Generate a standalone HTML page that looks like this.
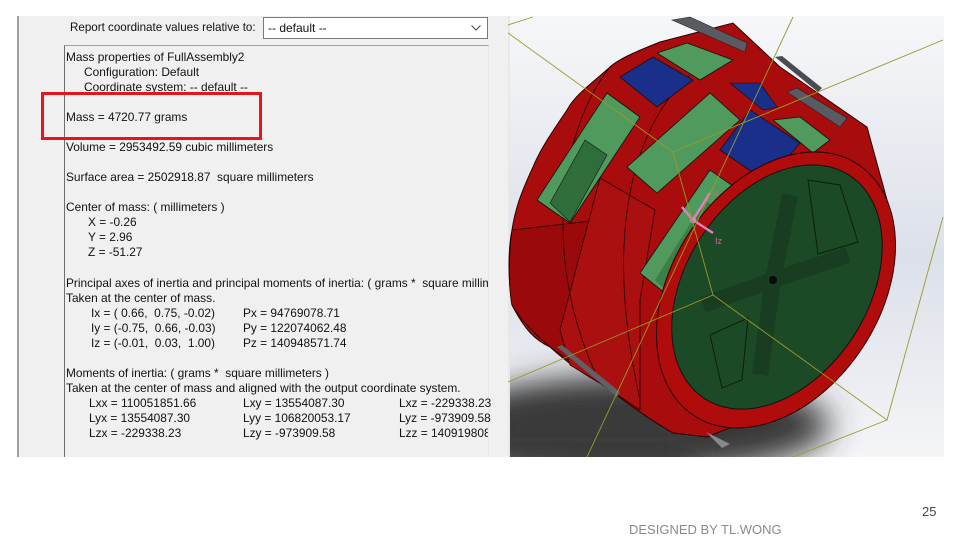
<!DOCTYPE html>
<html><head><meta charset="utf-8"><style>
*{margin:0;padding:0;box-sizing:border-box}
body{width:960px;height:540px;background:#fff;position:relative;overflow:hidden;font-family:"Liberation Sans",sans-serif}
#panel{position:absolute;left:17px;top:16px;width:491px;height:441px;background:#f0f0f0;border-left:2px solid #a0a0a0}
.t{position:absolute;font-size:11.9px;color:#111;white-space:nowrap;line-height:15px}
#lbl{left:70px;top:20px;font-size:11.6px}
#dd{position:absolute;left:263px;top:17px;width:225px;height:22px;background:#fff;border:1px solid #7a7a7a}
#box{position:absolute;left:64px;top:45px;width:425px;height:412px;border-left:1px solid #6d6d6d;border-top:1px solid #a0a0a0;border-right:1px solid #e6e6e6;background:#f0f0f0;overflow:hidden}
#red{position:absolute;left:41px;top:92px;width:221px;height:48px;border:3px solid #e8141c}
</style></head><body>
<div id="panel"></div>
<div class="t" id="lbl">Report coordinate values relative to:</div>
<div id="dd"><div class="t" style="left:4px;top:3px;font-size:12px">-- default --</div>
<svg style="position:absolute;right:6px;top:7px" width="10" height="6"><path d="M0.5 0.5 L5 5 L9.5 0.5" fill="none" stroke="#444" stroke-width="1"/></svg></div>
<div id="box"></div>
<div class="t" style="left:66px;top:50px">Mass properties of FullAssembly2</div>
<div class="t" style="left:84px;top:65px">Configuration: Default</div>
<div class="t" style="left:84px;top:80px">Coordinate system: -- default --</div>
<div class="t" style="left:66px;top:110px">Mass = 4720.77 grams</div>
<div class="t" style="left:66px;top:140px">Volume = 2953492.59 cubic millimeters</div>
<div class="t" style="left:66px;top:170px">Surface area = 2502918.87&nbsp; square millimeters</div>
<div class="t" style="left:66px;top:200px">Center of mass: ( millimeters )</div>
<div class="t" style="left:88px;top:215px">X = -0.26</div>
<div class="t" style="left:88px;top:230px">Y = 2.96</div>
<div class="t" style="left:88px;top:245px">Z = -51.27</div>
<div class="t" style="left:66px;top:276px;width:422px;overflow:hidden">Principal axes of inertia and principal moments of inertia: ( grams *&nbsp; square millimeters )</div>
<div class="t" style="left:66px;top:291px">Taken at the center of mass.</div>
<div class="t" style="left:91px;top:306px">Ix = ( 0.66,&nbsp; 0.75, -0.02)</div>
<div class="t" style="left:243px;top:306px">Px = 94769078.71</div>
<div class="t" style="left:91px;top:321px">Iy = (-0.75,&nbsp; 0.66, -0.03)</div>
<div class="t" style="left:243px;top:321px">Py = 122074062.48</div>
<div class="t" style="left:91px;top:336px">Iz = (-0.01,&nbsp; 0.03,&nbsp; 1.00)</div>
<div class="t" style="left:243px;top:336px">Pz = 140948571.74</div>
<div class="t" style="left:66px;top:366px">Moments of inertia: ( grams *&nbsp; square millimeters )</div>
<div class="t" style="left:66px;top:381px">Taken at the center of mass and aligned with the output coordinate system.</div>
<div class="t" style="left:89px;top:396px">Lxx = 110051851.66</div>
<div class="t" style="left:243px;top:396px">Lxy = 13554087.30</div>
<div class="t" style="left:399px;top:396px">Lxz = -229338.23</div>
<div class="t" style="left:89px;top:411px">Lyx = 13554087.30</div>
<div class="t" style="left:243px;top:411px">Lyy = 106820053.17</div>
<div class="t" style="left:399px;top:411px">Lyz = -973909.58</div>
<div class="t" style="left:89px;top:426px">Lzx = -229338.23</div>
<div class="t" style="left:243px;top:426px">Lzy = -973909.58</div>
<div class="t" style="left:399px;top:426px;width:89px;overflow:hidden">Lzz = 140919808.15</div>
<div id="red"></div>

<svg style="position:absolute;left:508px;top:16px" width="436" height="441" viewBox="508 16 436 441">
<defs>
<linearGradient id="bg" x1="0" y1="0" x2="0" y2="1"><stop offset="0" stop-color="#f6f7f9"/><stop offset="0.55" stop-color="#dce0e9"/><stop offset="1" stop-color="#f4f5f7"/></linearGradient>
<filter id="bl" x="-50%" y="-50%" width="200%" height="200%"><feGaussianBlur stdDeviation="16"/></filter>
</defs>
<rect x="508" y="16" width="436" height="441" fill="url(#bg)"/>
<ellipse cx="640" cy="425" rx="190" ry="50" fill="#383838" filter="url(#bl)"/>
<rect x="490" y="410" width="200" height="60" fill="#3a3a3a" filter="url(#bl)"/>
<rect x="508" y="16" width="2" height="441" fill="#e8e8e8"/>
<!-- drum body -->
<path d="M660 42 C640 50 620 58 610 67 C590 85 575 95 567 110 C550 135 540 150 533 167 C520 195 515 210 512 230 C508 250 508 280 512 305 C525 330 535 340 550 347 C570 365 585 375 600 383 C630 405 650 420 673 433 L707 437 L800 400 L887 200 L867 127 L780 67 L733 23 Z" fill="#a80c0c" stroke="#2a0000" stroke-width="1"/>
<path d="M512 230 C508 260 509 290 512 305 C530 335 560 355 600 383 L600 220 Z" fill="#9a0a0a" stroke="#2a0000" stroke-width="0.8"/>
<path d="M600 178 L655 210 L640 300 L640 410 L600 383 L570 365 L560 330 Z" fill="#aa1010" stroke="#2a0000" stroke-width="0.8"/>
<path d="M610 67 C560 130 540 260 600 383" fill="none" stroke="#2a0000" stroke-width="0.8"/>
<path d="M690 75 C640 120 600 220 640 400" fill="none" stroke="#2a0000" stroke-width="0.8"/>
<!-- windows -->
<path d="M537 200 L607 93 L640 117 L570 223 Z" fill="#4f9a5c" stroke="#111" stroke-width="0.8"/>
<path d="M550 203 L585 140 L607 155 L570 222 Z" fill="#2f6e3b" stroke="#111" stroke-width="0.6"/>
<path d="M620 77 L653 57 L693 80 L657 107 Z" fill="#1a2f8a" stroke="#111" stroke-width="0.8"/>
<path d="M657 53 L687 43 L733 60 L700 80 Z" fill="#4f9a5c" stroke="#111" stroke-width="0.8"/>
<path d="M627 167 L710 93 L740 120 L657 193 Z" fill="#4f9a5c" stroke="#111" stroke-width="0.8"/>
<path d="M730 83 L760 83 L777 107 L763 110 Z" fill="#1a2f8a" stroke="#111" stroke-width="0.6"/>
<path d="M720 150 L750 110 L800 143 L767 182 Z" fill="#1a2f8a" stroke="#111" stroke-width="0.8"/>
<path d="M773 120 L800 117 L830 140 L813 153 Z" fill="#4f9a5c" stroke="#111" stroke-width="0.8"/>
<path d="M640 273 L710 170 L743 193 L670 297 Z" fill="#4f9a5c" stroke="#111" stroke-width="0.8"/>
<path d="M655 280 L705 200 L715 207 L665 290 Z" fill="#3c8048"/>
<!-- gray clips -->
<path d="M672 20 L690 17 L747 43 L745 52 Z" fill="#5a5a62" stroke="#222" stroke-width="0.6"/>
<path d="M775 57 L782 56 L822 88 L818 92 Z" fill="#4a4a52"/>
<path d="M787 92 L797 88 L847 118 L840 127 Z" fill="#5a5a62" stroke="#222" stroke-width="0.6"/>
<path d="M557 347 L562 345 L620 392 L617 397 Z" fill="#606068"/>
<path d="M706 432 L722 448 L730 444 Z" fill="#888"/>
<!-- front rim -->
<ellipse cx="776" cy="290" rx="104" ry="150" transform="rotate(33 776 290)" fill="#b00c0c" stroke="#2a0000" stroke-width="1"/>
<ellipse cx="777" cy="287" rx="91" ry="133" transform="rotate(33 777 287)" fill="#1d4a26" stroke="#111" stroke-width="1"/>
<path d="M703 305 L773 280 L790 195 M773 280 L848 255 M773 280 L760 375" stroke="#183d20" stroke-width="16" fill="none"/>
<path d="M808 180 L840 185 L858 242 L818 254 Z M710 335 L748 318 L742 380 L722 388 Z" fill="none" stroke="#0b1f10" stroke-width="1"/>
<circle cx="773" cy="280" r="4" fill="#0b0b0b"/>
<!-- coord triad -->
<path d="M693 220 L710 193 M693 220 L713 233 M693 220 L682 207" stroke="#e080c0" stroke-width="2.5"/>
<circle cx="693" cy="220" r="3" fill="#e080c0"/>
<text x="712" y="196" font-size="9" fill="#d060b0" font-family="Liberation Sans">Ix</text>
<text x="715" y="244" font-size="9" fill="#d060b0" font-family="Liberation Sans">Iz</text>
<!-- yellow bounding box -->
<g stroke="#9a9a2a" stroke-width="0.9" fill="none">
<path d="M508 25 L533 17 M508 33 L673 152 L943 40 M673 152 L713 295 L887 420 L943 217 M713 295 L508 382 M887 420 L793 457 M793 17 L587 457"/>
</g>
</svg>
<div class="t" style="left:922px;top:504px;font-size:13px;color:#444">25</div>
<div class="t" style="left:629px;top:522px;font-size:13px;color:#8a8a8a">DESIGNED BY TL.WONG</div>
</body></html>
